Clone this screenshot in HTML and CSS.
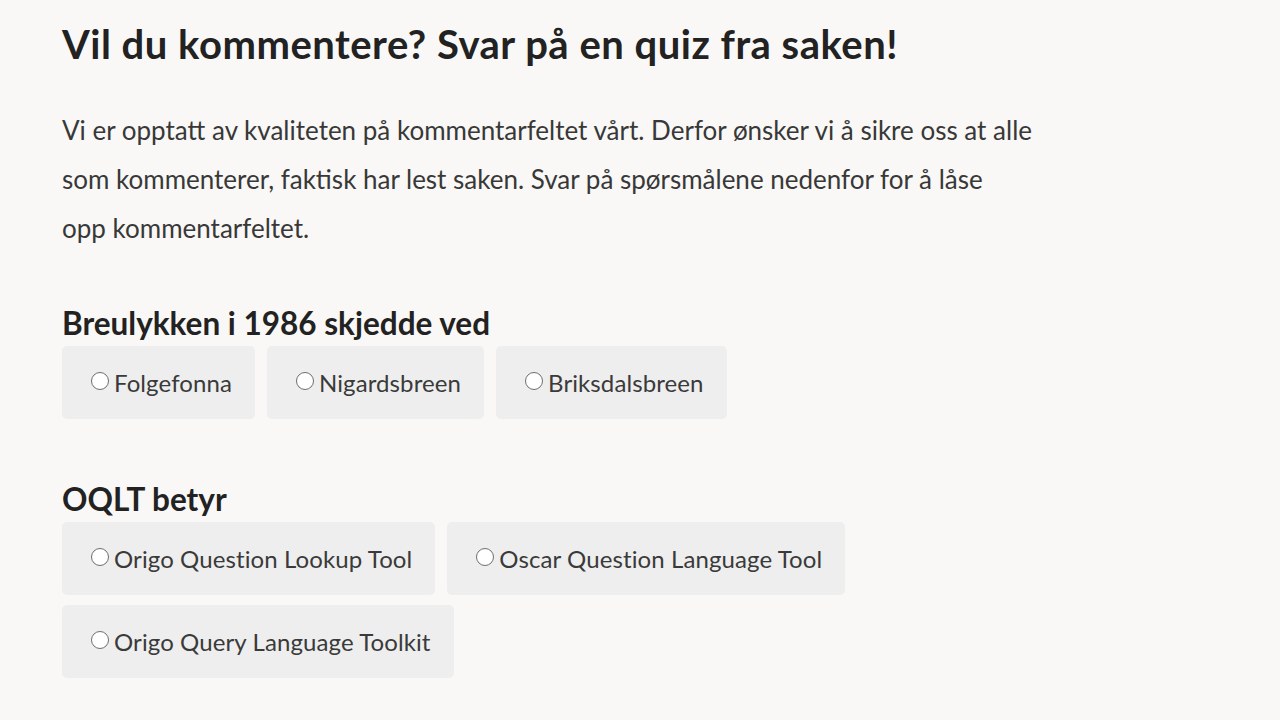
FILE: index.html
```html
<!DOCTYPE html>
<html lang="no">
<head>
<meta charset="utf-8">
<title>Quiz</title>
<link rel="stylesheet" href="styles.css">
</head>
<body>
<main class="quiz">
  <h1 class="quiz-title">Vil du kommentere? Svar på en quiz fra saken!</h1>
  <p class="quiz-intro">Vi er opptatt av kvaliteten på kommentarfeltet vårt. Derfor ønsker vi å sikre oss at alle som kommenterer, faktisk har lest saken. Svar på spørsmålene nedenfor for å låse opp kommentarfeltet.</p>

  <section class="question">
    <h2 class="question-title">Breulykken i 1986 skjedde ved</h2>
    <div class="options">
      <label class="option"><input type="radio" name="q1" class="radio"><span>Folgefonna</span></label>
      <label class="option"><input type="radio" name="q1" class="radio"><span>Nigardsbreen</span></label>
      <label class="option"><input type="radio" name="q1" class="radio"><span>Briksdalsbreen</span></label>
    </div>
  </section>

  <section class="question">
    <h2 class="question-title">OQLT betyr</h2>
    <div class="options">
      <label class="option"><input type="radio" name="q2" class="radio"><span>Origo Question Lookup Tool</span></label>
      <label class="option"><input type="radio" name="q2" class="radio"><span>Oscar Question Language Tool</span></label>
      <label class="option"><input type="radio" name="q2" class="radio"><span>Origo Query Language Toolkit</span></label>
    </div>
  </section>
</main>
</body>
</html>
```

FILE: styles.css
```css
html, body {
  margin: 0;
  padding: 0;
  background: #f9f8f6;
}

body {
  font-family: Lato, "Noto Sans", "Liberation Sans", sans-serif;
  color: #333;
}

.quiz {
  padding: 19px 62px 0 62px;
  max-width: 970px;
}

.quiz-title {
  margin: 0;
  font-size: 40px;
  line-height: 50px;
  font-weight: 700;
  letter-spacing: 0.5px;
  white-space: nowrap;
  color: #222;
}

.quiz-intro {
  margin: 37px 0 0 0;
  font-size: 26px;
  line-height: 49px;
  color: #383838;
}

.question {
  margin-top: 52px;
}

.question + .question {
  margin-top: 62px;
}

.question-title {
  margin: 0;
  font-size: 31.5px;
  line-height: 36px;
  font-weight: 700;
  color: #222;
}

.options {
  display: flex;
  flex-wrap: wrap;
  gap: 10px 12px;
  margin-top: 5px;
}

.option {
  display: flex;
  align-items: center;
  height: 73px;
  padding: 0 23px 0 29px;
  background: #eeeeee;
  border-radius: 5px;
  font-size: 24px;
  letter-spacing: 0.1px;
  color: #3a3a3a;
  cursor: pointer;
}

.radio {
  appearance: none;
  -webkit-appearance: none;
  flex: none;
  width: 18px;
  height: 18px;
  margin: 0 5px 3px 0;
  border: 1px solid #6e6e6e;
  border-radius: 50%;
  background: #fff;
}
```
